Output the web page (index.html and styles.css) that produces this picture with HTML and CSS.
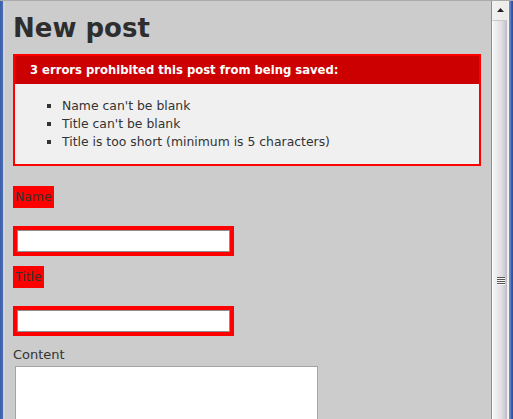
FILE: index.html
```html
<!DOCTYPE html>
<html>
<head>
<meta charset="utf-8">
<title>New post</title>
<link rel="stylesheet" href="styles.css">
</head>
<body>
<div class="window">
  <div class="frame-left"></div>
  <div class="viewport">
    <h1>New post</h1>
    <form class="post-form">
      <div id="error_explanation">
        <h2>3 errors prohibited this post from being saved:</h2>
        <ul>
          <li>Name can't be blank</li>
          <li>Title can't be blank</li>
          <li>Title is too short (minimum is 5 characters)</li>
        </ul>
      </div>
      <div class="field">
        <div class="field_with_errors"><label for="post_name" class="err-label">Name</label></div>
        <div class="spacer"></div>
        <div class="field_with_errors"><input type="text" id="post_name" class="text-input"></div>
      </div>
      <div class="field">
        <div class="field_with_errors"><label for="post_title" class="err-label">Title</label></div>
        <div class="spacer"></div>
        <div class="field_with_errors"><input type="text" id="post_title" class="text-input"></div>
      </div>
      <div class="field">
        <label for="post_content">Content</label>
        <textarea id="post_content" class="text-area"></textarea>
      </div>
    </form>
  </div>
  <div class="scrollbar">
    <div class="sb-up"><svg width="7" height="4" viewBox="0 0 7 4"><path d="M3.5 0 L7 4 L0 4 Z" fill="#222"/></svg></div>
    <div class="sb-thumb"><div class="grip"></div></div>
  </div>
  <div class="frame-right"></div>
</div>
</body>
</html>
```

FILE: styles.css
```css
html, body {
  margin: 0;
  padding: 0;
}

body {
  width: 513px;
  height: 419px;
  overflow: hidden;
  background: #ccc;
}

.window {
  display: flex;
  height: 419px;
  box-sizing: border-box;
  border-top: 1px solid #aaa;
}

.frame-left {
  width: 5px;
  flex: none;
  background: linear-gradient(to right, #3d5ea8 0, #4a6cb8 3px, #c8cdd6 3px, #d6d6d6 5px);
}

.frame-right {
  width: 4px;
  flex: none;
  background: linear-gradient(to right, #5478c8 0, #7d9ad6 1px, #3d62b6 2px, #2c4c98 4px);
}

.viewport {
  flex: 1;
  min-width: 0;
  padding: 0 8px;
  background: #ccc;
  color: #333;
  font-family: "DejaVu Sans", Verdana, sans-serif;
  font-size: 13px;
  line-height: 18px;
  overflow: hidden;
}

h1 {
  font-size: 26px;
  line-height: 18px;
  font-weight: bold;
  margin: 18px 0 17px;
  color: #2e2e2e;
}

#error_explanation {
  width: 450px;
  border: 2px solid #f00;
  padding: 7px 7px 0;
  margin-bottom: 20px;
  background-color: #f0f0f0;
}

#error_explanation h2 {
  margin: -7px -7px 0;
  padding: 5px 5px 5px 15px;
  font-size: 11.6px;
  line-height: 18px;
  font-weight: bold;
  background-color: #c00;
  color: #fff;
}

#error_explanation ul {
  margin: 13px 0;
  padding-left: 40px;
}

#error_explanation li {
  font-size: 12.4px;
  list-style: square;
}

.field {
  margin-bottom: 10px;
}

.spacer {
  height: 18px;
}

.field_with_errors {
  display: table;
  padding: 2px;
  background-color: #f00;
}

.err-label {
  font-size: 12.4px;
}

.text-input {
  display: block;
  margin: 2px;
  width: 213px;
  height: 22px;
  box-sizing: border-box;
  border: 1px solid #8f8f8f;
  background: #fff;
  padding: 0;
}

.text-area {
  display: block;
  margin: 2px 0 0 2px;
  width: 303px;
  height: 300px;
  box-sizing: border-box;
  border: 1px solid #a4a4a4;
  background: #fff;
  padding: 0;
  resize: none;
}

.scrollbar {
  width: 18px;
  flex: none;
  display: flex;
  flex-direction: column;
  background: linear-gradient(to right, #8e8e8e 0, #8e8e8e 1px, #f2f2f0 1px, #ecebe8 16px, #f6f6f4 18px);
}

.sb-up {
  height: 19px;
  flex: none;
  display: flex;
  align-items: center;
  justify-content: center;
  padding-left: 1px;
  padding-bottom: 1px;
  box-sizing: border-box;
}

.sb-thumb {
  flex: 1;
  margin: 0 2px 0 1px;
  border-left: 1px solid #fff;
  border-top: 1px solid #c8c8cc;
  background: linear-gradient(to right, #f4f4f4 0, #ececee 4px, #dcdce2 9px, #c6c3cc 13px, #b8b5c0 14px);
  display: flex;
  justify-content: center;
  padding-top: 256px;
  box-sizing: border-box;
}

.grip {
  width: 8px;
  height: 8px;
  margin-left: 1px;
  background: repeating-linear-gradient(to bottom, #555 0, #555 1px, #f8f8f8 1px, #f8f8f8 2px);
}
```
